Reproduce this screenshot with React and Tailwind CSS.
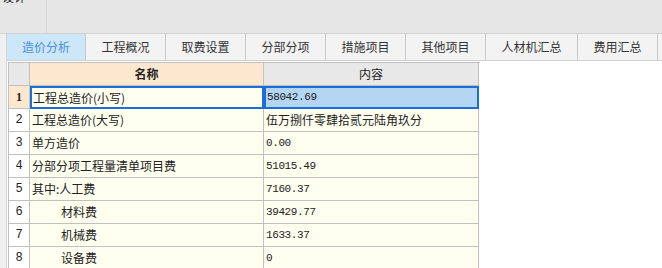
const tabs = [
  { label: '造价分析', w: 'w-[79px]' },
  { label: '工程概况', w: 'w-[80px]' },
  { label: '取费设置', w: 'w-[80px]' },
  { label: '分部分项', w: 'w-[80px]' },
  { label: '措施项目', w: 'w-[80px]' },
  { label: '其他项目', w: 'w-[80px]' },
  { label: '人材机汇总', w: 'w-[92px]' },
  { label: '费用汇总', w: 'w-[80px]' },
];

const rows = [
  { no: '1', name: '工程总造价(小写)', value: '58042.69', sel: true },
  { no: '2', name: '工程总造价(大写)', value: '伍万捌仟零肆拾贰元陆角玖分', cjk: true },
  { no: '3', name: '单方造价', value: '0.00' },
  { no: '4', name: '分部分项工程量清单项目费', value: '51015.49' },
  { no: '5', name: '其中:人工费', value: '7160.37' },
  { no: '6', name: '材料费', value: '39429.77', indent: true },
  { no: '7', name: '机械费', value: '1633.37', indent: true },
  { no: '8', name: '设备费', value: '0', indent: true },
];

const cjk = { fontFamily: '"Noto Sans CJK SC", "Noto Sans", sans-serif' };
const mono = { fontFamily: '"Liberation Mono", "Noto Sans CJK SC", monospace' };

export default function App() {
  return (
    <div className="w-[662px] h-[268px] overflow-hidden bg-white flex flex-col text-[#222]" style={cjk}>
      {/* top toolbar strip */}
      <div className="h-[34px] shrink-0 flex bg-[#e6e6e6] border-b border-[#d2d2d2]">
        <div className="w-[47px] border-r border-[#d6d6d6] overflow-hidden">
          <div className="-mt-[10px] text-[12px] leading-[14px] text-[#333] whitespace-nowrap -ml-[22px]">造价设计</div>
        </div>
      </div>

      <div className="flex flex-1 min-h-0">
        <div className="w-[7px] shrink-0 bg-[#f0f0f0] border-r border-[#d4d4d4]" />
        <div className="flex-1 flex flex-col min-w-0">
          {/* tabs */}
          <div className="h-[27px] shrink-0 flex bg-[#f3f3f3] border-b border-[#d0d0d0]">
            {tabs.map((t, i) => (
              <div
                key={t.label}
                className={`${t.w} shrink-0 flex items-center justify-center text-[12px] border-r border-[#c8c8c8] ${
                  i === 0 ? 'bg-[#cce6fa] text-[#4a8fd8]' : 'text-[#333]'
                }`}
              >
                {t.label}
              </div>
            ))}
          </div>

          {/* table */}
          <div className="ml-[1px] mt-[1px] w-[472px] border-l border-t border-[#c0c0c0]">
            <div className="flex h-[23px]">
              <div className="w-[21px] bg-[#e8e8e8] border-r border-b border-[#c0c0c0]" />
              <div className="w-[234px] bg-[#fde8cf] border-r border-b border-[#c0c0c0] flex items-center justify-center text-[12px] font-bold">名称</div>
              <div className="w-[215px] bg-[#e8e8e8] border-r border-b border-[#c0c0c0] flex items-center justify-center text-[12px]">内容</div>
            </div>
            {rows.map((r) => (
              <div key={r.no} className="flex h-[23px]">
                <div
                  className={`w-[21px] border-r border-b border-[#c0c0c0] flex items-center justify-center text-[12px] ${
                    r.sel ? 'bg-[#fde8cf] font-bold' : 'bg-white'
                  }`}
                  style={r.sel ? { fontFamily: '"Liberation Serif", serif' } : mono}
                >
                  {r.no}
                </div>
                <div
                  className={`w-[234px] bg-[#fffff0] flex items-center text-[12px] whitespace-nowrap ${
                    r.sel ? 'border-2 border-[#1c6fd8] pl-[1px]' : 'border-r border-b border-[#c0c0c0] pl-[2px]'
                  } ${r.indent ? 'pl-[31px]' : ''}`}
                >
                  {r.name}
                </div>
                <div
                  className={`w-[215px] flex items-center whitespace-nowrap ${
                    r.sel ? 'bg-[#b4d6f3] border-2 border-[#1c6fd8] pl-[1px]' : 'bg-[#fffff0] border-r border-b border-[#c0c0c0] pl-[2px]'
                  } ${r.cjk ? 'text-[12px]' : 'text-[11px] tracking-[-0.4px]'}`}
                  style={r.cjk ? cjk : mono}
                >
                  {r.value}
                </div>
              </div>
            ))}
          </div>
        </div>
      </div>
    </div>
  );
}
